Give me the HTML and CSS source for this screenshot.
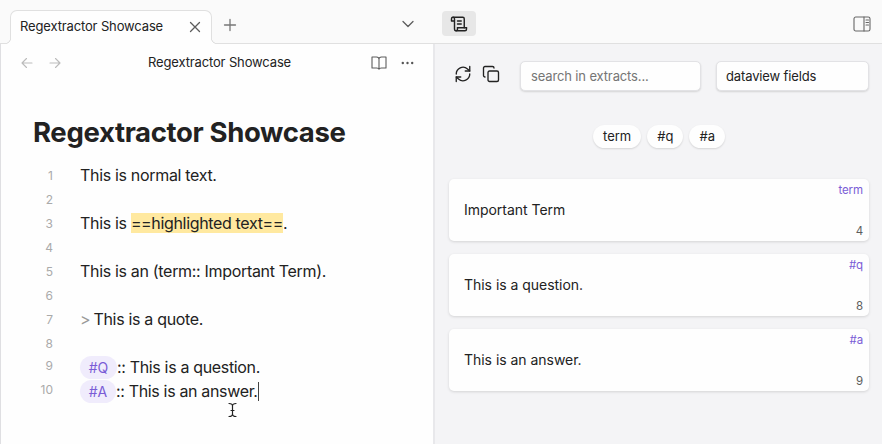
FILE: index.html
```html
<!DOCTYPE html>
<html lang="en">
<head>
<meta charset="utf-8">
<title>Regextractor Showcase</title>
<link rel="stylesheet" href="styles.css">
</head>
<body>
<div class="app">
  <header class="tabbar">
    <div class="tab">
      <span class="tab-title">Regextractor Showcase</span>
      <svg class="tab-close" viewBox="0 0 12 12"><path d="M1.5 1.5l9 9M10.5 1.5l-9 9"/></svg>
    </div>
    <svg class="tab-add" viewBox="0 0 14 14"><path d="M7 1.500v11M1.500 7h11"/></svg>
    <svg class="tab-menu" viewBox="0 0 12 8"><path d="M1 1.5l5 5 5-5"/></svg>
    <div class="side-tab">
      <svg viewBox="0 0 24 24"><path d="M10 17v2a2 2 0 0 1-2 2a2 2 0 0 1-2-2V5a2 2 0 0 0-4 0v3h4"/><path d="M22 17v2a2 2 0 0 1-2 2H8"/><path d="M19 17V5a2 2 0 0 0-2-2H4"/><path d="M22 17H10M10 8h5M10 12h5"/></svg>
    </div>
    <svg class="panel-toggle" viewBox="0 0 18 16"><rect x="1" y="1" width="16" height="14" rx="1.8"/><path d="M11 1v14M13 4h2.5M13 6.5h2.5M13 9h2.5"/></svg>
  </header>
  <div class="panes">
    <main class="editor">
      <div class="view-header">
        <svg class="nav" viewBox="0 0 12 12"><path d="M11 6H1M5.5 1.5L1 6l4.500 4.500"/></svg>
        <svg class="nav forward" viewBox="0 0 12 12"><path d="M1 6h10M6.500 1.500L11 6l-4.500 4.500"/></svg>
        <span class="view-title">Regextractor Showcase</span>
        <svg class="book" viewBox="0 0 16 14"><path d="M8 3v10.300M1 1h4.500C7 1 8 2 8 3.300C8 2 9 1 10.500 1H15v11H10.500C9 12 8 12.500 8 13.300C8 12.500 7 12 5.500 12H1z"/></svg>
        <svg class="more" viewBox="0 0 13 4"><circle cx="1.800" cy="2" r="1.200"/><circle cx="6.500" cy="2" r="1.200"/><circle cx="11.200" cy="2" r="1.200"/></svg>
      </div>
      <h1>Regextractor Showcase</h1>
      <div class="lines">
        <div class="line"><span class="num">1</span><span class="text">This is normal text.</span></div>
        <div class="line"><span class="num">2</span></div>
        <div class="line"><span class="num">3</span><span class="text">This is <mark>==highlighted text==</mark>.</span></div>
        <div class="line"><span class="num">4</span></div>
        <div class="line"><span class="num">5</span><span class="text">This is an (term:: Important Term).</span></div>
        <div class="line"><span class="num">6</span></div>
        <div class="line"><span class="num">7</span><span class="text"><span class="quote">&gt;</span> This is a quote.</span></div>
        <div class="line"><span class="num">8</span></div>
        <div class="line tagged"><span class="num">9</span><span class="hash q">#Q</span><span class="text">:: This is a question.</span></div>
        <div class="line tagged"><span class="num">10</span><span class="hash a">#A</span><span class="text">:: This is an answer.</span><span class="caret"></span></div>
      </div>
      <svg class="pointer" viewBox="0 0 9 16"><path class="halo" d="M1 1.500Q4.500 1.500 4.500 4Q4.500 1.500 8 1.500M4.500 3v10M1 14.500Q4.500 14.500 4.500 12Q4.500 14.500 8 14.500M3 8.500h3"/><path d="M1 1.500Q4.500 1.500 4.500 4Q4.500 1.500 8 1.500M4.500 3v10M1 14.500Q4.500 14.500 4.500 12Q4.500 14.500 8 14.500M3 8.500h3"/></svg>
    </main>
    <aside class="extracts">
      <div class="toolbar">
        <svg class="refresh" viewBox="0 0 24 24"><path d="M21 2v6h-6"/><path d="M3 12a9 9 0 0 1 15-6.700L21 8"/><path d="M3 22v-6h6"/><path d="M21 12a9 9 0 0 1-15 6.700L3 16"/></svg>
        <svg class="copy" viewBox="0 0 24 24"><rect x="8" y="8" width="14" height="14" rx="2"/><path d="M4 16c-1.100 0-2-.900-2-2V4c0-1.100.900-2 2-2h10c1.100 0 2 .900 2 2"/></svg>
        <div class="field search">search in extracts...</div>
        <div class="field select">dataview fields</div>
      </div>
      <div class="chips"><span class="chip">term</span><span class="chip">#q</span><span class="chip">#a</span></div>
      <div class="cards">
        <article class="card"><p>Important Term</p><div class="meta"><span class="kind">term</span><span class="count">4</span></div></article>
        <article class="card"><p>This is a question.</p><div class="meta"><span class="kind">#q</span><span class="count">8</span></div></article>
        <article class="card"><p>This is an answer.</p><div class="meta"><span class="kind">#a</span><span class="count">9</span></div></article>
      </div>
    </aside>
  </div>
</div>
</body>
</html>
```
FILE: styles.css
```css
* { box-sizing: border-box; }
body { margin: 0; font-family: Inter, sans-serif; font-size: 13px; color: #222; background: #fefefe; }
svg { display: block; flex: none; fill: none; stroke: #5c5c5c; stroke-width: 1.3; stroke-linecap: round; stroke-linejoin: round; }
.app { width: 882px; height: 444px; overflow: hidden; display: flex; flex-direction: column; }
.tabbar { height: 44px; flex: none; display: flex; align-items: flex-start; background: #fafafa; border-bottom: 1px solid #e0e0e0; padding-left: 10px; }
.tab { position: relative; width: 202px; height: 34px; margin-top: 10px; display: flex; align-items: center; padding: 0 10px 1px 9px; background: #fefefe; border: 1px solid #e0e0e0; border-bottom: 0; border-radius: 7px 7px 0 0; justify-content: space-between; }
.tab::before, .tab::after { content: ""; position: absolute; bottom: 0; width: 6px; height: 6px; }
.tab::before { left: -6px; background: radial-gradient(circle at 0 0, #fafafa 4.800px, #e0e0e0 5.300px 5.800px, #fefefe 6.300px); }
.tab::after { right: -6px; background: radial-gradient(circle at 100% 0, #fafafa 4.800px, #e0e0e0 5.300px 5.800px, #fefefe 6.300px); }
.tab-title, .view-title { white-space: nowrap; letter-spacing: -0.14px; }
.tab-title { padding-bottom: 2px; }
.tab-close { width: 12px; height: 12px; }
.tab-add { width: 14px; height: 14px; margin: 18px 0 0 11px; stroke: #777; }
.tab-menu { width: 12px; height: 8px; margin: 20px 0 0 165px; }
.side-tab { width: 34px; height: 25px; margin: 11px 0 0 28px; border-radius: 4px; background: #e7e7e7; display: flex; align-items: center; justify-content: center; }
.side-tab svg { width: 18px; height: 18px; stroke: #222; stroke-width: 1.9; }
.panel-toggle { width: 18px; height: 16px; margin: 16px 0 0 377px; stroke-width: 1.1; stroke: #666; }
.panes { flex: 1; display: flex; min-height: 0; }
.editor { width: 435px; border-left: 1px solid #dfdfe2; border-right: 2px solid #e8e8eb; background: #fefefe; }
.view-header { height: 37px; display: flex; align-items: center; padding-left: 20px; }
.nav { width: 12px; height: 12px; stroke: #bbb; stroke-width: 1.1; }
.forward { margin-left: 16px; }
.view-title { margin-left: 87px; width: 143px; padding-bottom: 1px; }
.book { width: 16px; height: 14px; margin-left: 80px; stroke-width: 1.1; }
.more { width: 13px; height: 4px; margin-left: 14px; fill: #555; stroke: none; }
h1 { margin: 35px 0 0 32px; font-size: 27.5px; line-height: 32px; font-weight: 700; letter-spacing: -0.35px; white-space: nowrap; }
.lines { margin-top: 15px; }
.line { height: 24px; display: flex; align-items: center; white-space: nowrap; font-size: 16px; }
.text { letter-spacing: -0.32px; }
.tagged .text { letter-spacing: -0.34px; }
.num { width: 52px; margin-right: 27px; text-align: right; font-size: 12px; color: #aaa; }
.tagged .num { padding-bottom: 3px; }
mark { background: #ffe9a0; color: inherit; letter-spacing: -0.34px; }
.quote { color: #999; margin-right: -1px; }
.hash { height: 23px; line-height: 24px; margin-top: 1px; border-radius: 12px; background: #f0ecfc; color: #7a5cd6; font-size: 14px; text-align: center; }
.q { width: 37px; }
.a { width: 36px; }
.caret { width: 1px; height: 19px; background: #444; }
.pointer { width: 9px; height: 16px; margin: -1px 0 0 227px; stroke: #222; stroke-width: 1.2; }
.halo { stroke: #fff; stroke-width: 2.500; }
.extracts { flex: 1; background: #f4f4f6; padding: 17px 13px 0 14px; }
.toolbar { display: flex; height: 30px; }
.toolbar svg { width: 18px; height: 18px; stroke: #222; stroke-width: 1.8; margin-top: 4px; }
.refresh { margin-left: 5px; }
.toolbar .copy { margin-left: 10px; }
.field { height: 30px; line-height: 28px; border: 1px solid #e2e2e5; border-radius: 5px; background: #fefefe; box-shadow: 0 1px 2px #0002; padding-left: 10px; white-space: nowrap; letter-spacing: -0.14px; }
.search { width: 181px; margin-left: 20px; color: #757575; }
.select { width: 153px; margin-left: 15px; padding-left: 9px; }
.chips { display: flex; gap: 6px; margin: 34px 0 0 144px; }
.chip { height: 23px; line-height: 23px; padding: 0 10px; border-radius: 12px; background: #fefefe; box-shadow: 0 1px 2px #0002; }
.cards { margin-top: 31px; display: flex; flex-direction: column; gap: 13px; }
.card { height: 62px; border-radius: 5px; background: #fefefe; box-shadow: 0 1px 3px #0002; display: flex; justify-content: space-between; padding: 0 6px 0 15px; }
.card p { margin: 0; line-height: 62px; font-size: 14px; letter-spacing: -0.03px; }
.meta { display: flex; flex-direction: column; justify-content: space-between; align-items: flex-end; padding: 4px 0 3px; font-size: 11.500px; line-height: 14px; letter-spacing: -0.1px; }
.kind { color: #7a5cd6; }
.count { color: #5c5c5c; }
```
